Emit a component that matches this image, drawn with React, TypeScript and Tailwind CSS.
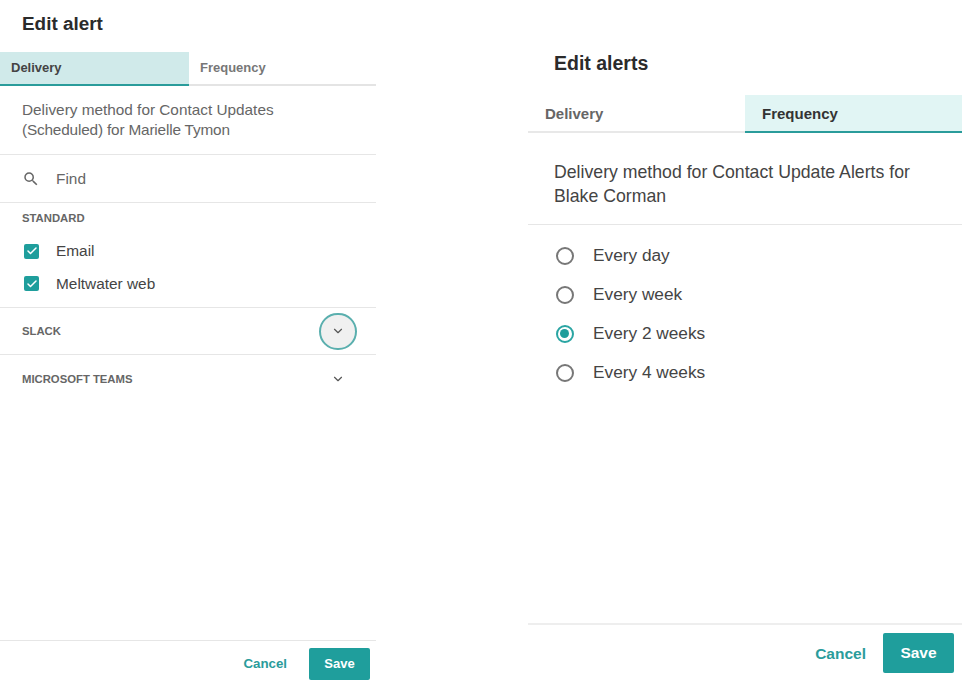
import { ChevronDown, Check } from "lucide-react";

const font = "font-['Liberation_Sans',Arial,sans-serif]";

const Divider = () => <div className="h-px bg-[#e6e6e6]" />;

const CheckRow = ({ label, tall }: { label: string; tall?: boolean }) => (
  <div className={tall ? "flex h-[33px] items-center pl-6" : "flex h-[32px] items-center pl-6"}>
    <span className="flex h-[15px] w-[15px] items-center justify-center rounded-[2px] bg-[#1f9e9c]">
      <Check size={12} strokeWidth={3} className="text-white" />
    </span>
    <span className="ml-[17px] text-[15.4px] text-[#444]">{label}</span>
  </div>
);

const RadioRow = ({ label, checked }: { label: string; checked?: boolean }) => (
  <div className="flex h-[39px] items-center pl-[27.5px]">
    {checked ? (
      <span className="flex h-[18px] w-[18px] items-center justify-center rounded-full border-2 border-[#2aa5a3]">
        <span className="h-[9px] w-[9px] rounded-full bg-[#1f9e9c]" />
      </span>
    ) : (
      <span className="h-[18px] w-[18px] rounded-full border-2 border-[#777]" />
    )}
    <span className="ml-[19.5px] text-[17.25px] text-[#444]">{label}</span>
  </div>
);

const EditAlert = () => (
  <div className="flex h-[684px] w-[376px] flex-col">
    <h2 className="flex h-[52px] items-center pb-[3px] pl-[22px] text-[18.9px] font-bold text-[#2b2b2b]">
      Edit alert
    </h2>
    <div className="flex h-[34px] border-b-2 border-[#e4e4e4] text-[13px] font-bold">
      <div className="-mb-[2px] flex w-[189px] items-center border-b-2 border-[#2a9c9b] bg-[#d0eaea] pl-[11px] text-[#444]">
        Delivery
      </div>
      <div className="flex items-center pl-[11px] text-[#777]">Frequency</div>
    </div>
    <p className="h-[68px] pl-[22px] pt-[14px] text-[15.35px] leading-[20px] text-[#666]">
      Delivery method for Contact Updates
      <br />
      <span className="tracking-[-0.17px]">(Scheduled) for Marielle Tymon</span>
    </p>
    <Divider />
    <div className="flex h-[47px] items-center pl-[22px]">
      <svg viewBox="0 0 24 24" className="h-[18px] w-[18px] fill-[#666]">
        <path d="M15.5 14h-.79l-.28-.27A6.471 6.471 0 0 0 16 9.5 6.5 6.5 0 1 0 9.5 16c1.61 0 3.09-.59 4.23-1.57l.27.28v.79l5 4.99L20.49 19l-4.99-5zm-6 0C7.01 14 5 11.99 5 9.5S7.01 5 9.5 5 14 7.01 14 9.5 11.99 14 9.5 14z" />
      </svg>
      <span className="ml-4 text-[15.4px] text-[#666]">Find</span>
    </div>
    <Divider />
    <div className="flex h-[32px] items-center pb-px pl-[22px] text-[11.3px] font-bold text-[#666]">STANDARD</div>
    <CheckRow label="Email" />
    <CheckRow label="Meltwater web" tall />
    <div className="h-[7px]" />
    <Divider />
    <div className="flex h-[46px] items-center justify-between pl-[22px] pr-[19px] text-[11.3px] font-bold text-[#666]">
      SLACK
      <span className="flex h-[37px] w-[38px] items-center justify-center rounded-full border-2 border-[#5aafae] bg-[#f0f0f0]">
        <ChevronDown size={14} className="text-[#555]" />
      </span>
    </div>
    <Divider />
    <div className="flex h-[48px] items-center justify-between pl-[22px] pr-[31px] text-[11.3px] font-bold text-[#666]">
      MICROSOFT TEAMS
      <ChevronDown size={14} className="text-[#555]" />
    </div>
    <div className="flex-1" />
    <Divider />
    <div className="flex h-[43px] items-end justify-end pr-[6px] pb-[4px]">
      <span className="mb-[6px] mr-[22px] text-[13.3px] font-bold text-[#2a9c9b]">Cancel</span>
      <button className="h-[32px] w-[61px] rounded-[2px] bg-[#1f9e9c] text-[13px] font-bold text-white">Save</button>
    </div>
  </div>
);

const EditAlerts = () => (
  <div className="flex h-[684px] w-[434px] flex-col">
    <h2 className="flex h-[95px] items-end pb-[17px] pl-[26px] text-[19.5px] font-bold text-[#2b2b2b]">
      Edit alerts
    </h2>
    <div className="flex h-[38px] border-b-2 border-[#e8e8e8] text-[15px] font-bold">
      <div className="flex w-[217px] items-center pl-[17px] pt-[2px] text-[#666]">Delivery</div>
      <div className="-mb-[2px] flex flex-1 items-center border-b-2 border-[#2a9c9b] bg-[#e1f5f4] pl-[17px] pt-[2px] text-[#333]">
        Frequency
      </div>
    </div>
    <p className="h-[91px] pl-[26px] pt-[27px] text-[17.7px] leading-[24px] text-[#444]">
      Delivery method for Contact Update Alerts for
      <br />
      Blake Corman
    </p>
    <Divider />
    <div className="pt-[11px]">
      <RadioRow label="Every day" />
      <RadioRow label="Every week" />
      <RadioRow label="Every 2 weeks" checked />
      <RadioRow label="Every 4 weeks" />
    </div>
    <div className="flex-1" />
    <div className="h-[2px] bg-[#eeeeee]" />
    <div className="flex h-[59px] justify-end pr-2 pt-[8px]">
      <span className="mr-[17px] mt-[9px] text-[15.5px] font-bold text-[#2a9c9b]">Cancel</span>
      <button className="h-[40px] w-[71px] rounded-[2px] bg-[#1f9e9c] text-[15.5px] font-bold text-white">Save</button>
    </div>
  </div>
);

export default function App() {
  return (
    <div className={`${font} flex h-[684px] w-[962px] justify-between overflow-hidden bg-white`}>
      <EditAlert />
      <EditAlerts />
    </div>
  );
}
